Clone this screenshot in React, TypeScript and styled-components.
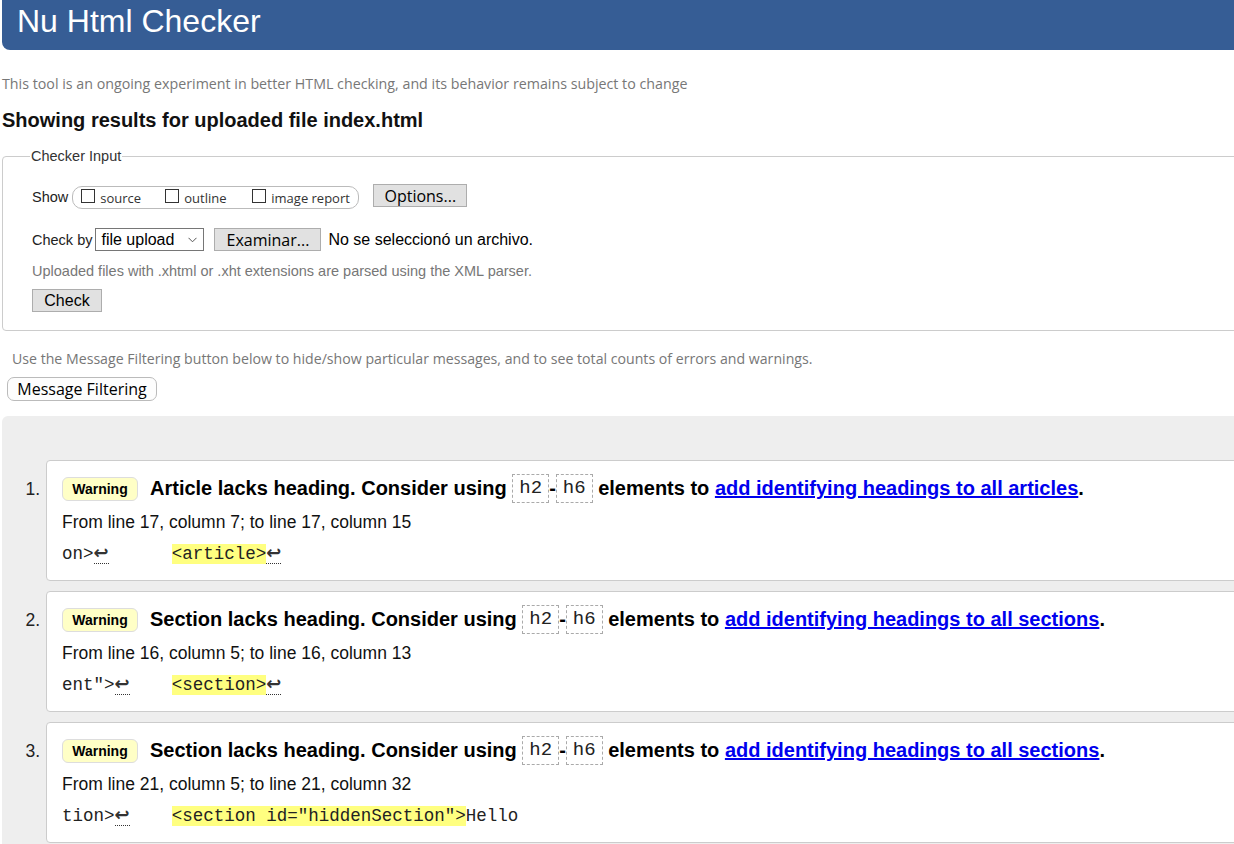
import React from "react";
import styled, { createGlobalStyle } from "styled-components";

const Global = createGlobalStyle`
  html, body { margin: 0; padding: 0; background: #fff; overflow: hidden; }
  body { font-family: "Liberation Sans", Arial, sans-serif; color: #000; }
`;

const SEGOE = `"Open Sans", "Noto Sans", sans-serif`;
const ARIAL = `"Liberation Sans", Arial, sans-serif`;
const MONO = `"Liberation Mono", "Courier New", monospace`;

const Page = styled.div`
  width: 1270px;
  padding-left: 2px;
`;

const Header = styled.h1`
  margin: 0;
  height: 50px;
  box-sizing: border-box;
  padding: 5px 0 0 15px;
  background: #365d95;
  color: #fff;
  font-family: ${ARIAL};
  font-weight: normal;
  font-size: 32px;
  line-height: 32px;
  border-bottom-left-radius: 8px;
`;

const Intro = styled.p`
  margin: 24px 0 0 0;
  font-family: ${SEGOE};
  font-size: 14.25px;
  line-height: 20px;
  color: #777;
`;

const Title = styled.h2`
  margin: 15px 0 0 0;
  font-family: ${ARIAL};
  font-weight: bold;
  font-size: 20px;
  line-height: 22px;
  color: #111;
`;

const Fieldset = styled.fieldset`
  margin: 17px 0 0 0;
  padding: 10px 0 18px 29px;
  border: 1px solid #ccc;
  border-radius: 4px;
  min-width: 0;
`;

const Legend = styled.legend`
  margin-left: -2px;
  padding: 0 1px;
  font-family: ${ARIAL};
  font-size: 14.5px;
  color: #333;
`;

const Row = styled.div<{ $mt: number; $align?: string }>`
  display: flex;
  align-items: ${(p) => p.$align ?? "center"};
  margin-top: ${(p) => p.$mt}px;
`;

const Label = styled.span<{ $mr?: number; $mt?: number }>`
  font-family: ${ARIAL};
  font-size: 14.5px;
  color: #222;
  margin-top: ${(p) => p.$mt ?? 0}px;
  margin-right: ${(p) => p.$mr ?? 4}px;
`;

const CheckGroup = styled.div`
  display: flex;
  align-items: center;
  height: 23px;
  margin-top: 2px;
  box-sizing: border-box;
  width: 287px;
  border: 1px solid #bbb;
  border-radius: 10px;
  padding-left: 8px;
`;

const CheckItem = styled.label<{ $w: number }>`
  display: flex;
  align-items: center;
  width: ${(p) => p.$w}px;
  font-family: ${SEGOE};
  font-size: 13px;
  color: #333;
`;

const Box = styled.span`
  display: inline-block;
  width: 14px;
  height: 14px;
  box-sizing: border-box;
  border: 1px solid #333;
  margin-right: 5px;
  margin-top: -4px;
  background: #fff;
`;

const GrayButton = styled.button<{ $w: number; $arial?: boolean; $ml?: number; $mt?: number }>`
  display: block;
  width: ${(p) => p.$w}px;
  height: 23px;
  margin: ${(p) => p.$mt ?? 0}px 0 0 ${(p) => p.$ml ?? 0}px;
  padding: 0;
  border: 1px solid #adadad;
  background: #e1e1e1;
  font-family: ${(p) => (p.$arial ? ARIAL : SEGOE)};
  font-size: 16px;
  color: #000;
  border-radius: 0;
`;

const Select = styled.div`
  display: flex;
  align-items: center;
  justify-content: space-between;
  width: 109px;
  height: 23px;
  box-sizing: border-box;
  border: 1px solid #767676;
  padding: 0 6px 0 5px;
  font-family: ${ARIAL};
  font-size: 16px;
  color: #000;
`;

const FileText = styled.span`
  margin-left: 7px;
  font-family: ${ARIAL};
  font-size: 16px;
  color: #000;
`;

const Hint = styled.p`
  margin: 10px 0 0 0;
  font-family: ${ARIAL};
  font-size: 14.5px;
  line-height: 20px;
  color: #777;
`;

const FilterNote = styled.p`
  margin: 18px 0 0 10px;
  font-family: ${SEGOE};
  font-size: 14.15px;
  line-height: 20px;
  color: #777;
`;

const RoundButton = styled.button`
  display: block;
  margin: 8px 0 0 5px;
  height: 24px;
  width: 150px;
  padding: 0;
  border: 1px solid #bbb;
  border-radius: 7px;
  background: #fdfdfd;
  font-family: ${SEGOE};
  font-size: 16px;
  color: #000;
`;

const Results = styled.div`
  margin-top: 15px;
  background: #eee;
  border-top-left-radius: 6px;
  padding: 44px 0 20px 0;
`;

const List = styled.ol`
  list-style: none;
  margin: 0;
  padding: 0;
  display: flex;
  flex-direction: column;
  gap: 10px;
`;

const Item = styled.li`
  display: flex;
  align-items: flex-start;
`;

const Num = styled.span`
  width: 38px;
  padding-top: 19px;
  text-align: right;
  padding-right: 6px;
  font-family: ${ARIAL};
  font-size: 17.5px;
  line-height: 20px;
  color: #222;
`;

const Card = styled.div`
  flex: 1;
  height: 121px;
  box-sizing: border-box;
  background: #fff;
  border: 1px solid #ccc;
  border-radius: 4px;
  padding: 13px 0 0 15px;
`;

const MsgLine = styled.p`
  margin: 0;
  display: flex;
  align-items: center;
  height: 29px;
  font-family: ${ARIAL};
  font-weight: bold;
  font-size: 20px;
  white-space: pre;
  color: #000;
`;

const Badge = styled.span`
  display: inline-flex;
  align-items: center;
  justify-content: center;
  width: 76px;
  height: 24px;
  box-sizing: border-box;
  border: 1px solid #ddd;
  border-radius: 6px;
  background: #ffffc6;
  font-family: ${ARIAL};
  font-weight: bold;
  font-size: 14px;
  margin-right: 12px;
`;

const Code = styled.code`
  display: inline-block;
  font-family: ${MONO};
  font-weight: normal;
  font-size: 19px;
  line-height: 27px;
  padding: 0 6px;
  border: 1px dashed #aaa;
  color: #222;
`;

const Link = styled.a`
  color: #0000ee;
  text-decoration: underline;
`;

const Location = styled.p`
  margin: 9px 0 0 0;
  font-family: ${ARIAL};
  font-size: 17.5px;
  line-height: 20px;
  color: #111;
`;

const Extract = styled.p`
  margin: 10px 0 0 0;
  font-family: ${MONO};
  font-size: 17.5px;
  line-height: 24px;
  white-space: pre;
  color: #222;
`;

const Mark = styled.mark`
  background: #ffff80;
  color: #222;
`;

const LF = styled.b`
  font-weight: bold;
  font-family: "DejaVu Sans", sans-serif;
  font-size: 18px;
  line-height: 20px;
  border-bottom: 1px dotted #333;
  color: #333;
`;

type Msg = {
  n: number;
  what: string;
  linkText: string;
  from: string;
  pre: string;
  spaces: string;
  hl: string;
  post: string;
  lfAfter: boolean;
};

const messages: Msg[] = [
  {
    n: 1,
    what: "Article",
    linkText: "add identifying headings to all articles",
    from: "From line 17, column 7; to line 17, column 15",
    pre: "on>",
    spaces: "      ",
    hl: "<article>",
    post: "",
    lfAfter: true,
  },
  {
    n: 2,
    what: "Section",
    linkText: "add identifying headings to all sections",
    from: "From line 16, column 5; to line 16, column 13",
    pre: 'ent">',
    spaces: "    ",
    hl: "<section>",
    post: "",
    lfAfter: true,
  },
  {
    n: 3,
    what: "Section",
    linkText: "add identifying headings to all sections",
    from: "From line 21, column 5; to line 21, column 32",
    pre: "tion>",
    spaces: "    ",
    hl: '<section id="hiddenSection">',
    post: "Hello",
    lfAfter: false,
  },
];

export default function App() {
  return (
    <Page>
      <Global />
      <Header>Nu Html Checker</Header>
      <Intro>
        This tool is an ongoing experiment in better HTML checking, and its behavior remains subject to change
      </Intro>
      <Title>Showing results for uploaded file index.html</Title>
      <Fieldset>
        <Legend>Checker Input</Legend>
        <Row $mt={10} $align="flex-start">
          <Label $mt={5}>Show</Label>
          <CheckGroup>
            <CheckItem $w={84}>
              <Box />
              source
            </CheckItem>
            <CheckItem $w={87}>
              <Box />
              outline
            </CheckItem>
            <CheckItem $w={100}>
              <Box />
              image report
            </CheckItem>
          </CheckGroup>
          <GrayButton $w={94} $ml={14}>
            Options...
          </GrayButton>
        </Row>
        <Row $mt={19}>
          <Label $mr={3}>Check by</Label>
          <Select>
            file upload
            <svg width="9" height="6" viewBox="0 0 9 6">
              <path d="M0.5 0.8 L4.5 4.8 L8.5 0.8" fill="none" stroke="#555" strokeWidth="1" />
            </svg>
          </Select>
          <GrayButton $w={107} $ml={10}>
            Examinar...
          </GrayButton>
          <FileText>No se seleccionó un archivo.</FileText>
        </Row>
        <Hint>Uploaded files with .xhtml or .xht extensions are parsed using the XML parser.</Hint>
        <GrayButton $w={70} $arial $mt={8}>
          Check
        </GrayButton>
      </Fieldset>
      <FilterNote>
        Use the Message Filtering button below to hide/show particular messages, and to see total counts of errors and warnings.
      </FilterNote>
      <RoundButton>Message Filtering</RoundButton>
      <Results>
        <List>
          {messages.map((m) => (
            <Item key={m.n}>
              <Num>{m.n}.</Num>
              <Card>
                <MsgLine>
                  <Badge>Warning</Badge>
                  {m.what} lacks heading. Consider using <Code>h2</Code>-<Code>h6</Code> elements to{" "}
                  <Link href="#">{m.linkText}</Link>.
                </MsgLine>
                <Location>{m.from}</Location>
                <Extract>
                  {m.pre}
                  <LF>↩</LF>
                  {m.spaces}
                  <Mark>{m.hl}</Mark>
                  {m.lfAfter ? <LF>↩</LF> : m.post}
                </Extract>
              </Card>
            </Item>
          ))}
        </List>
      </Results>
    </Page>
  );
}
